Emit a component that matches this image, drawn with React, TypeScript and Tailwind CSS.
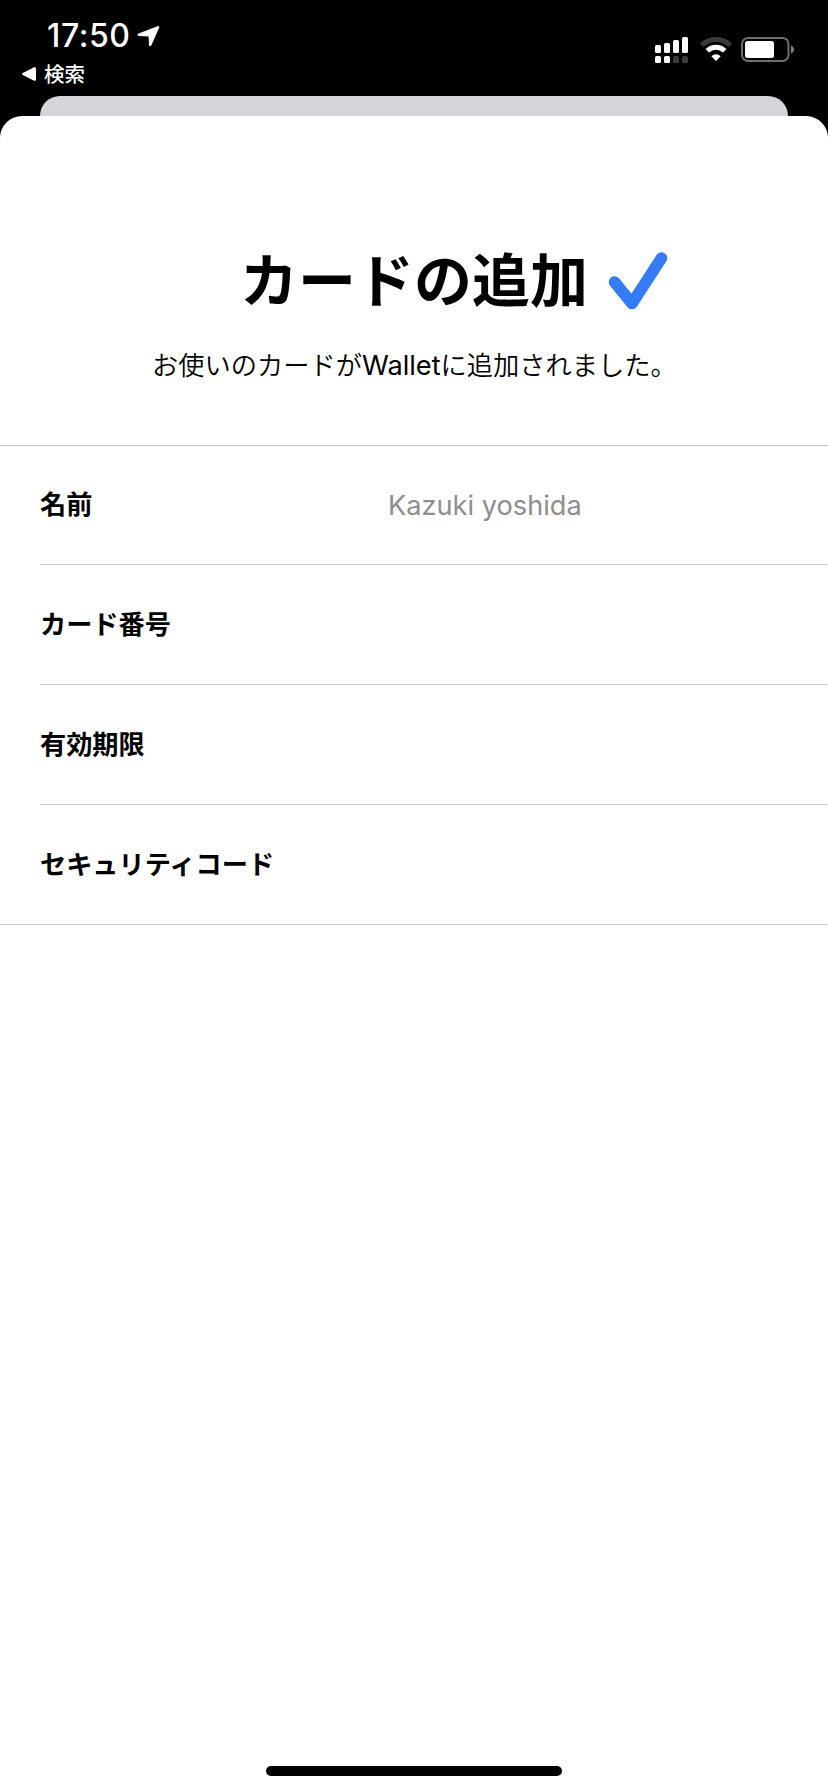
const fields = [
  { label: "名前", value: "Kazuki yoshida" },
  { label: "カード番号", value: "" },
  { label: "有効期限", value: "" },
  { label: "セキュリティコード", value: "" },
];

function SignalIcon() {
  return (
    <svg width="33" height="26" viewBox="0 0 33 26" fill="#fff">
      <rect x="0" y="8" width="6" height="8" rx="1.5" />
      <rect x="9" y="6" width="6" height="10" rx="1.5" />
      <rect x="18" y="3" width="6" height="13" rx="1.5" />
      <rect x="27" y="0" width="6" height="16" rx="1.5" />
      <rect x="0" y="19" width="6" height="7" rx="1.5" />
      <rect x="9" y="19" width="6" height="7" rx="1.5" />
      <rect x="18" y="19" width="6" height="7" rx="1.5" fill="#3a3a3a" />
      <rect x="27" y="19" width="6" height="7" rx="1.5" fill="#3a3a3a" />
    </svg>
  );
}

function WifiIcon() {
  return (
    <svg width="32" height="24" viewBox="0 0 32 24" fill="none">
      <path d="M1.8 8.2A20.3 20.3 0 0 1 30.2 8.2" stroke="#3a3a3a" strokeWidth="5" />
      <path d="M7.3 13.8A12.4 12.4 0 0 1 24.7 13.8" stroke="#fff" strokeWidth="5" />
      <path d="M11.3 19.2A6.8 6.8 0 0 1 20.7 19.2L16 24Z" fill="#fff" />
    </svg>
  );
}

function BatteryIcon() {
  return (
    <svg width="53" height="25" viewBox="0 0 53 25" fill="none">
      <rect x="1" y="1" width="46.5" height="23" rx="6" stroke="#6e6e6e" strokeWidth="2" />
      <rect x="4" y="4" width="29" height="17" rx="2.5" fill="#fff" />
      <path d="M50 8.5C52 9.3 53 10.8 53 12.5S52 15.7 50 16.5Z" fill="#808080" />
    </svg>
  );
}

function StatusBar() {
  return (
    <header className="flex h-24 justify-between text-white">
      <div className="pl-[22px] pt-4">
        <div className="flex h-10 items-center pl-[25px]">
          <span className="text-[32px] leading-10 font-medium tracking-[0.6px]">17:50</span>
          <svg className="ml-1.5" width="23" height="21" viewBox="0 0 23 21" fill="#fff">
            <path d="M20.5 .2C21.8-.2 22.6 .7 22 2L14.4 19.2C13.9 20.6 12 20.4 12 18.9L11.6 10.5 2 10C.2 9.9-.1 8.2 1.5 7.6Z" />
          </svg>
        </div>
        <div className="flex h-9 items-center gap-2">
          <svg width="14" height="14" viewBox="0 0 14 14" fill="#fff">
            <path d="M.8 6.1 12.2.3Q14-.3 14 1.5V12.5Q14 14.3 12.2 13.7L.8 7.9Q-.5 7 .8 6.1Z" />
          </svg>
          <span className="pt-0.5 text-[20.5px] leading-9 font-medium">検索</span>
        </div>
      </div>
      <div className="flex items-start pr-[34px] pt-[37px]">
        <SignalIcon />
        <div className="ml-3 mr-[9px]">
          <WifiIcon />
        </div>
        <BatteryIcon />
      </div>
    </header>
  );
}

function CheckIcon() {
  return (
    <svg className="ml-5" width="60" height="58" viewBox="0 0 60 58" fill="none">
      <path d="M6.5 30 24 51.5 53.5 6" stroke="#347cf7" strokeWidth="11.5" strokeLinecap="round" strokeLinejoin="round" />
    </svg>
  );
}

export default function App() {
  return (
    <div className="flex h-[1792px] w-[828px] flex-col bg-black font-['Inter','Noto_Sans_CJK_JP',sans-serif] text-black">
      <StatusBar />
      <div className="mx-10 h-5 shrink-0 rounded-t-[20px] bg-[#d5d4d9]" />
      <main className="flex flex-1 flex-col rounded-t-[22px] bg-white">
        <div className="h-[329px] pt-[131px]">
          <div className="flex h-[68px] items-center pl-[240px]">
            <h1 className="text-[58px] leading-[68px] font-semibold whitespace-nowrap">カードの追加</h1>
            <CheckIcon />
          </div>
          <p className="mt-[33px] pl-[152px] text-[26.25px] leading-9 font-[350] whitespace-nowrap">
            お使いのカードが<span className="text-[27.2px] font-normal">Wallet</span>に追加されました。
          </p>
        </div>
        <ul className="border-y border-[#c6c6c8]">
          {fields.map((field) => (
            <li
              key={field.label}
              className="ml-10 flex h-[120px] items-center border-b border-[#c6c6c8] text-[26.2px] first:h-[119px] last:h-[119px] last:border-b-0"
            >
              <span className="w-[348px] font-semibold">{field.label}</span>
              <span className="pt-0.5 text-[27.2px] text-[#8e8e8e]">{field.value}</span>
            </li>
          ))}
        </ul>
        <div className="mx-auto mt-auto mb-4 h-2.5 w-[296px] rounded-full bg-black" />
      </main>
    </div>
  );
}
